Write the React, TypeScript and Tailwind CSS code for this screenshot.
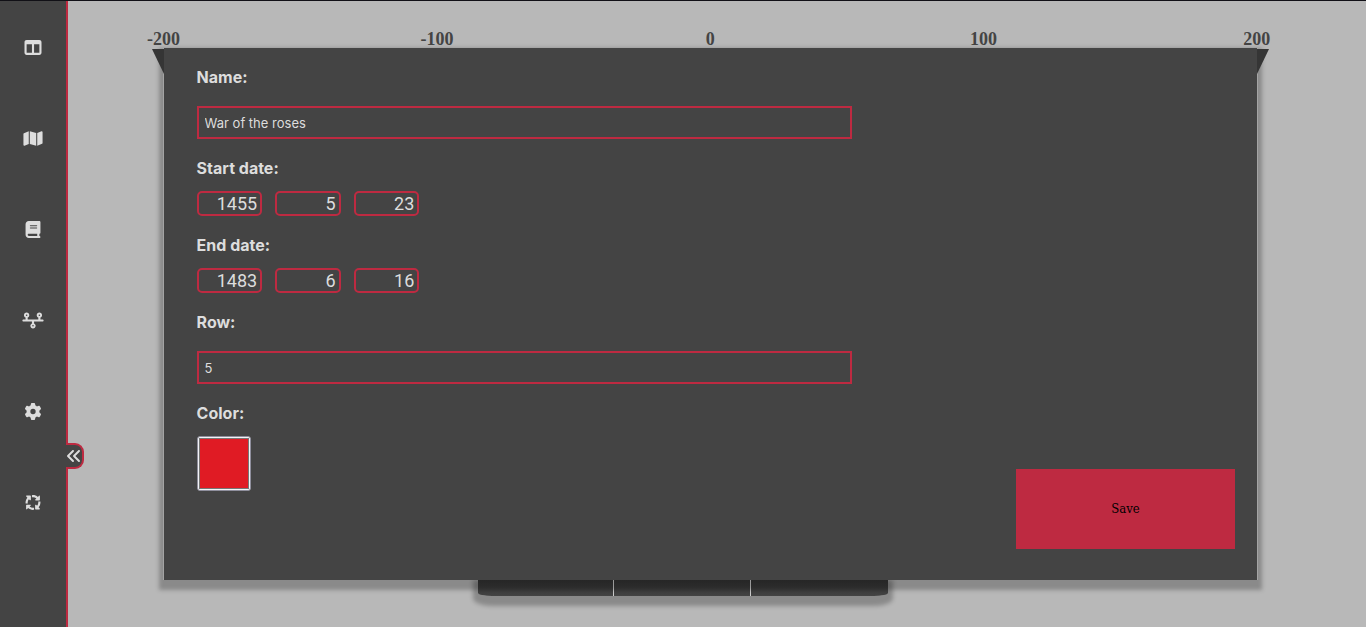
import { useState } from "react";
import {
  FaAnglesLeft,
  FaArrowsSpin,
  FaBook,
  FaGear,
  FaMap,
  FaTableColumns,
  FaTimeline,
} from "react-icons/fa6";
import type { IconType } from "react-icons";

const navItems: { label: string; icon: IconType }[] = [
  { label: "Boards", icon: FaTableColumns },
  { label: "Maps", icon: FaMap },
  { label: "Documents", icon: FaBook },
  { label: "Timelines", icon: FaTimeline },
  { label: "Settings", icon: FaGear },
  { label: "Refresh", icon: FaArrowsSpin },
];

const years = [-200, -100, 0, 100, 200];

const labelClass = "block font-[Inter,sans-serif] text-[16px] leading-6 font-bold";
const textInputClass =
  "mt-[17px] mb-[17px] block h-[33px] w-[48vw] border-2 border-[#be2a41] bg-transparent px-1.5 font-[Inter,sans-serif] text-[13px] outline-none";

function Sidebar() {
  return (
    <aside className="relative w-[68px] shrink-0 border-r-2 border-[#be2a41] bg-[#444]">
      <nav className="flex flex-col items-center pt-px">
        {navItems.map(({ label, icon: Icon }) => (
          <a
            key={label}
            href="#"
            aria-label={label}
            className="flex h-[91px] w-full items-center justify-center"
          >
            <Icon className="h-[17px] w-[22px]" />
          </a>
        ))}
      </nav>
      <button
        type="button"
        aria-label="Collapse sidebar"
        className="absolute top-[442px] left-full flex h-[26px] w-[18px] items-center justify-center rounded-r-[9px] border-2 border-l-0 border-[#be2a41] bg-[#444]"
      >
        <FaAnglesLeft className="h-4 w-4 shrink-0" />
      </button>
    </aside>
  );
}

function DateFields({ legend, initial }: { legend: string; initial: number[] }) {
  const [parts, setParts] = useState(initial.map(String));
  const names = ["year", "month", "day"];
  return (
    <fieldset className="mb-[17px]">
      <legend className={labelClass}>{legend}</legend>
      <div className="mt-[11px] flex gap-[13px]">
        {parts.map((value, i) => (
          <input
            key={names[i]}
            aria-label={names[i]}
            inputMode="numeric"
            value={value}
            onChange={(e) =>
              setParts(parts.map((p, j) => (j === i ? e.target.value : p)))
            }
            className="h-[25px] w-[4.8vw] rounded-[5px] border-2 border-[#be2a41] bg-transparent pr-[3px] text-right text-[18px] outline-none"
          />
        ))}
      </div>
    </fieldset>
  );
}

function Corner({ side }: { side: "left" | "right" }) {
  return (
    <svg
      viewBox="0 0 12 25"
      aria-hidden="true"
      className={
        side === "left"
          ? "absolute top-px right-full h-[25px] w-3"
          : "absolute top-px left-full h-[25px] w-3"
      }
    >
      <path d={side === "left" ? "M0 0H12V25Z" : "M12 0H0V25Z"} fill="#353535" />
    </svg>
  );
}

function EventForm() {
  return (
    <form
      onSubmit={(e) => e.preventDefault()}
      className="relative z-10 flex min-h-[calc(85vh-1px)] flex-col bg-[#444] pt-[17px] pr-[22px] pl-[33px] shadow-[1px_0_0_#a4a4a4,-1px_0_0_#a4a4a4,0_5px_4px_5px_rgba(0,0,0,0.25)]"
    >
      <Corner side="left" />
      <Corner side="right" />
      <label htmlFor="name" className={labelClass}>
        Name:
      </label>
      <input id="name" defaultValue="War of the roses" className={textInputClass} />
      <DateFields legend="Start date:" initial={[1455, 5, 23]} />
      <DateFields legend="End date:" initial={[1483, 6, 16]} />
      <label htmlFor="row" className={labelClass}>
        Row:
      </label>
      <input id="row" defaultValue="5" className={textInputClass} />
      <div className="flex grow items-stretch justify-between">
        <div>
          <label htmlFor="color" className={labelClass}>
            Color:
          </label>
          <input
            id="color"
            type="color"
            defaultValue="#e01b24"
            className="mt-[11px] block h-[55px] w-[54px] appearance-none rounded-[3px] border border-[#8f8f9d] bg-[#f4f4f6] p-0 [&::-webkit-color-swatch]:rounded-none [&::-webkit-color-swatch]:border [&::-webkit-color-swatch]:border-[#777] [&::-webkit-color-swatch-wrapper]:p-px"
          />
        </div>
        <button
          type="submit"
          className="mb-[31px] h-20 w-[16vw] self-end bg-[#be2a41] font-['DejaVu_Serif_Condensed','DejaVu_Serif',serif] text-[13px] text-black"
        >
          Save
        </button>
      </div>
    </form>
  );
}

export default function App() {
  return (
    <div className="flex min-h-screen border-t border-[#111016] bg-[#b8b8b8] font-[Roboto,sans-serif] text-[#ddd]">
      <Sidebar />
      <main className="mr-[8vw] ml-[7vw] flex-1 pt-[29px]">
        <div className="flex justify-between font-['Liberation_Serif',serif] text-[18px] leading-[18px] font-bold text-[#444]">
          {years.map((year) => (
            <span key={year} className="flex w-0 justify-center">
              {year}
            </span>
          ))}
        </div>
        <EventForm />
        <div className="ml-[23vw] grid h-4 w-[30vw] grid-cols-3 divide-x divide-[#ccc] rounded-b-[14px_3px] bg-linear-to-b from-[#333] to-[#444] shadow-[0_5px_4px_5px_rgba(0,0,0,0.25)]">
          <div />
          <div />
          <div />
        </div>
      </main>
    </div>
  );
}
